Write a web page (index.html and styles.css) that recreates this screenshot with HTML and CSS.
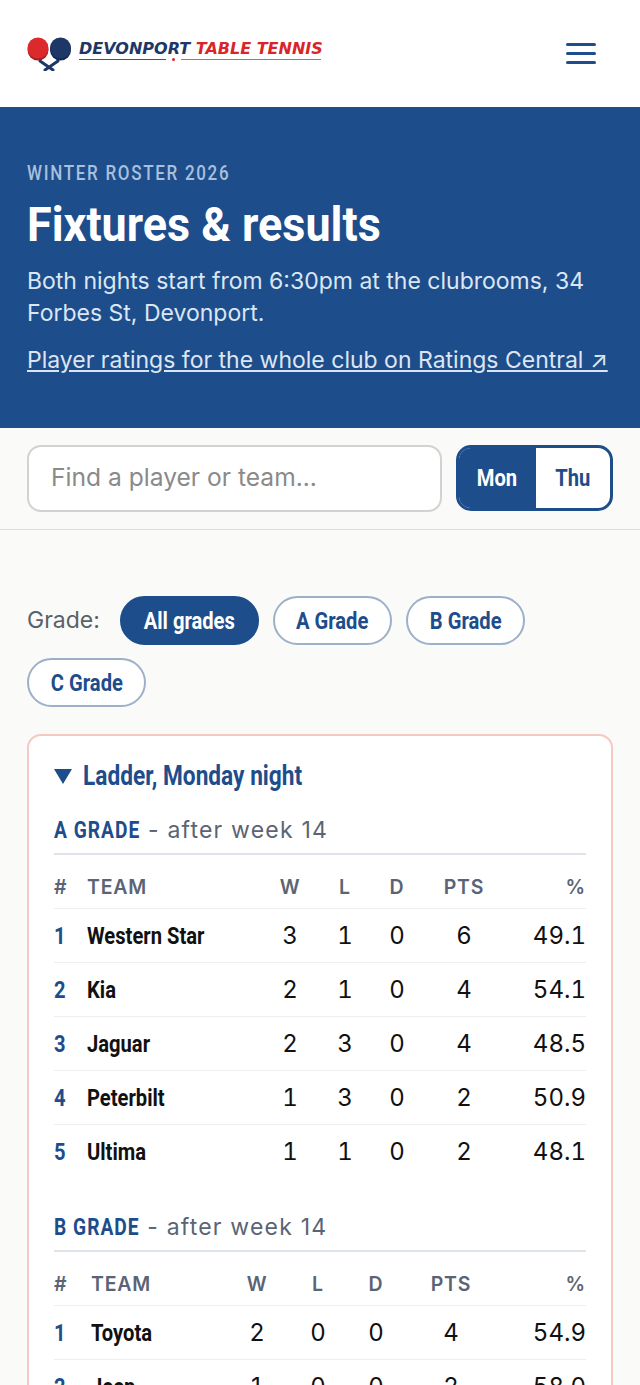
FILE: index.html
```html
<!DOCTYPE html>
<html lang="en">
<head>
    <meta charset="UTF-8">
    <meta name="viewport" content="width=device-width, initial-scale=1.0">
    <title>Fixtures &amp; results</title>
    <link rel="stylesheet" href="styles.css">
</head>
<body>
    <header class="site-header">
        <a class="logo" href="#">
            <svg class="logo-mark" width="46" height="34" viewBox="0 0 46 34">
                <path d="M13 24 L26 33 M31 24 L18 33" stroke="#1d3767" stroke-width="3" stroke-linecap="round"/>
                <circle cx="11" cy="13" r="10.5" fill="#a61c22"/>
                <circle cx="11" cy="11" r="10.5" fill="#dc2a2c"/>
                <circle cx="33.5" cy="13" r="10.5" fill="#14284f"/>
                <circle cx="33.5" cy="11" r="10.5" fill="#1d3767"/>
            </svg>
            <span class="logo-text">
                <span class="logo-name"><span class="logo-blue">DEVONPORT</span> <span class="logo-red">TABLE TENNIS</span></span>
                <span class="logo-rule"><i class="rule-blue"></i><i class="rule-dot"></i><i class="rule-red"></i></span>
            </span>
        </a>
        <button class="menu-btn" type="button" aria-label="Menu"><span></span><span></span><span></span></button>
    </header>

    <section class="hero">
        <p class="eyebrow">WINTER ROSTER 2026</p>
        <h1>Fixtures &amp; results</h1>
        <p class="intro">Both nights start from 6:30pm at the clubrooms, 34 Forbes St, Devonport.</p>
        <a class="ratings-link" href="#">Player ratings for the whole club on Ratings Central ↗</a>
    </section>

    <div class="toolbar">
        <input class="search" type="text" placeholder="Find a player or team...">
        <div class="night-toggle">
            <button class="night active" type="button"><span class="squeeze">Mon</span></button>
            <button class="night" type="button"><span class="squeeze">Thu</span></button>
        </div>
    </div>

    <main class="content">
        <div class="grade-filter">
            <span class="grade-label">Grade:</span>
            <button class="chip active" type="button"><span class="squeeze">All grades</span></button>
            <button class="chip" type="button"><span class="squeeze">A Grade</span></button>
            <button class="chip" type="button"><span class="squeeze">B Grade</span></button>
            <button class="chip" type="button"><span class="squeeze">C Grade</span></button>
        </div>

        <details class="card" open>
            <summary class="card-title"><span class="caret"></span><span class="squeeze-left">Ladder, Monday night</span></summary>

            <h2 class="grade-head"><strong>A GRADE</strong> - after week 14</h2>
            <table class="ladder">
                <colgroup>
                    <col class="a-pos"><col class="a-team"><col class="a-w"><col class="a-l"><col class="a-d"><col class="a-pts"><col class="a-pct">
                </colgroup>
                <thead>
                    <tr><th class="left">#</th><th class="left">TEAM</th><th>W</th><th>L</th><th>D</th><th>PTS</th><th class="right">%</th></tr>
                </thead>
                <tbody>
                    <tr><td class="pos"><span class="squeeze-left">1</span></td><td class="team"><span class="squeeze-left">Western Star</span></td><td>3</td><td>1</td><td>0</td><td>6</td><td class="right">49.1</td></tr>
                    <tr><td class="pos"><span class="squeeze-left">2</span></td><td class="team"><span class="squeeze-left">Kia</span></td><td>2</td><td>1</td><td>0</td><td>4</td><td class="right">54.1</td></tr>
                    <tr><td class="pos"><span class="squeeze-left">3</span></td><td class="team"><span class="squeeze-left">Jaguar</span></td><td>2</td><td>3</td><td>0</td><td>4</td><td class="right">48.5</td></tr>
                    <tr><td class="pos"><span class="squeeze-left">4</span></td><td class="team"><span class="squeeze-left">Peterbilt</span></td><td>1</td><td>3</td><td>0</td><td>2</td><td class="right">50.9</td></tr>
                    <tr><td class="pos"><span class="squeeze-left">5</span></td><td class="team"><span class="squeeze-left">Ultima</span></td><td>1</td><td>1</td><td>0</td><td>2</td><td class="right">48.1</td></tr>
                </tbody>
            </table>

            <h2 class="grade-head second"><strong>B GRADE</strong> - after week 14</h2>
            <table class="ladder">
                <colgroup>
                    <col class="b-pos"><col class="b-team"><col class="b-w"><col class="b-l"><col class="b-d"><col class="b-pts"><col class="b-pct">
                </colgroup>
                <thead>
                    <tr><th class="left">#</th><th class="left">TEAM</th><th>W</th><th>L</th><th>D</th><th>PTS</th><th class="right">%</th></tr>
                </thead>
                <tbody>
                    <tr><td class="pos"><span class="squeeze-left">1</span></td><td class="team"><span class="squeeze-left">Toyota</span></td><td>2</td><td>0</td><td>0</td><td>4</td><td class="right">54.9</td></tr>
                    <tr><td class="pos"><span class="squeeze-left">2</span></td><td class="team"><span class="squeeze-left">Jeep</span></td><td>1</td><td>0</td><td>0</td><td>2</td><td class="right">58.0</td></tr>
                </tbody>
            </table>
        </details>
    </main>
</body>
</html>
```

FILE: styles.css
```css
* {
    box-sizing: border-box;
}
body {
    margin: 0;
    font-family: Inter, Arial, sans-serif;
    background-color: #fafaf9;
    color: #111;
}
button {
    cursor: pointer;
}

/* no condensed face is installed, so Roboto gets narrowed */
.squeeze,
.squeeze-left {
    display: inline-block;
    transform: scaleX(0.84);
    white-space: nowrap;
}
.squeeze-left {
    transform-origin: left center;
}

/* header */
.site-header {
    height: 107px;
    background-color: #fff;
    padding: 0 44px 0 27px;
    display: flex;
    align-items: center;
    justify-content: space-between;
}
.logo {
    display: flex;
    align-items: center;
    gap: 6px;
    text-decoration: none;
}
.logo-mark {
    display: block;
}
.logo-text {
    display: flex;
    flex-direction: column;
    gap: 1px;
    margin-top: -6px;
}
.logo-name {
    font-family: "DejaVu Sans", Arial, sans-serif;
    font-size: 16px;
    line-height: 16px;
    font-weight: 700;
    font-style: italic;
    white-space: nowrap;
}
.logo-blue {
    color: #1d3767;
}
.logo-red {
    color: #d9252a;
}
.logo-rule {
    display: flex;
    align-items: center;
    gap: 6px;
}
.logo-rule i {
    display: block;
    height: 1px;
}
.rule-blue {
    width: 87px;
    background-color: #3a5488;
}
.rule-dot {
    width: 3px;
    height: 3px !important;
    border-radius: 50%;
    background-color: #d9252a;
}
.rule-red {
    width: 140px;
    background-color: #e8585a;
}
.menu-btn {
    width: 30px;
    padding: 0;
    border: none;
    background: none;
    display: flex;
    flex-direction: column;
    gap: 6px;
}
.menu-btn span {
    display: block;
    height: 3px;
    border-radius: 2px;
    background-color: #1e4d8b;
}

/* hero */
.hero {
    height: 321px;
    padding: 55px 27px 0;
    background-color: #1e4d8b;
    color: #fff;
}
.eyebrow {
    margin: 0;
    font-family: Roboto, Arial, sans-serif;
    font-size: 20px;
    line-height: 23px;
    font-weight: 500;
    letter-spacing: 2px;
    color: #a9c0dc;
    transform: scaleX(0.85);
    transform-origin: left center;
    white-space: nowrap;
}
h1 {
    margin: 12px 0 0;
    font-family: Roboto, Arial, sans-serif;
    font-size: 48px;
    line-height: 56px;
    font-weight: 700;
    transform: scaleX(0.936);
    transform-origin: left center;
    white-space: nowrap;
}
.intro {
    margin: 12px 0 0;
    font-size: 23px;
    line-height: 32px;
    color: #dce6f3;
}
.ratings-link {
    display: inline-block;
    margin-top: 15px;
    font-size: 23px;
    line-height: 33px;
    color: #dce6f3;
    white-space: nowrap;
}

/* search and night switch */
.toolbar {
    height: 102px;
    padding: 17px 27px 0;
    display: flex;
    gap: 14px;
    align-items: flex-start;
    border-bottom: 1px solid #ddd;
}
.search {
    flex: 1;
    min-width: 0;
    height: 67px;
    padding: 0 23px 4px 22px;
    border: 2px solid #d2d2d2;
    border-radius: 14px;
    background-color: #fff;
    font-family: Inter, Arial, sans-serif;
    font-size: 24.6px;
}
.search::placeholder {
    color: #8a8a8a;
}
.night-toggle {
    width: 157px;
    height: 66px;
    display: flex;
    overflow: hidden;
    border: 3px solid #1e4d8b;
    border-radius: 15px;
    background-color: #fff;
}
.night {
    border: none;
    padding: 0;
    background: none;
    font-family: Roboto, Arial, sans-serif;
    font-size: 24px;
    font-weight: 700;
    color: #1e4d8b;
    flex: 1;
}
.night.active {
    flex: 0 0 77px;
    background-color: #1e4d8b;
    color: #fff;
}

/* grade filter */
.content {
    padding: 66px 27px 0;
}
.grade-filter {
    display: flex;
    flex-wrap: wrap;
    align-items: center;
    gap: 13px 14px;
}
.grade-label {
    font-size: 23px;
    line-height: 46px;
    padding-bottom: 2px;
    color: #5a6068;
    margin-right: 6px;
}
.chip {
    width: 119px;
    height: 49px;
    padding: 0;
    border: 2px solid #9db0c9;
    border-radius: 25px;
    background-color: #fff;
    font-family: Roboto, Arial, sans-serif;
    font-size: 24px;
    font-weight: 700;
    color: #1e4d8b;
}
.chip.active {
    width: 139px;
    border-color: #1e4d8b;
    background-color: #1e4d8b;
    color: #fff;
}

/* ladder card */
.card {
    margin-top: 27px;
    padding: 21px 25px 27px;
    border: 2px solid #f5c8c1;
    border-radius: 14px;
    background-color: #fff;
}
.card-title {
    display: flex;
    align-items: center;
    gap: 11px;
    list-style: none;
    font-family: Roboto, Arial, sans-serif;
    font-size: 27px;
    line-height: 38px;
    font-weight: 700;
    color: #1e4d8b;
}
.caret {
    width: 0;
    height: 0;
    border-left: 9px solid transparent;
    border-right: 9px solid transparent;
    border-top: 15px solid #1e4d8b;
}
.grade-head {
    margin: 20px 0 0;
    padding-bottom: 7px;
    border-bottom: 2px solid #dfe4ea;
    font-size: 23px;
    line-height: 30px;
    font-weight: 400;
    letter-spacing: 1.2px;
    color: #5a6474;
    white-space: nowrap;
}
.grade-head strong {
    display: inline-block;
    margin-right: -17px;
    font-family: Roboto, Arial, sans-serif;
    font-weight: 700;
    color: #1e4d8b;
    transform: scaleX(0.835);
    transform-origin: left center;
}
.grade-head.second {
    margin-top: 34px;
}
.ladder {
    width: 100%;
    table-layout: fixed;
    border-collapse: collapse;
}
.ladder th {
    height: 53px;
    padding: 12px 0 0;
    text-align: center;
    font-size: 19.5px;
    font-weight: 600;
    letter-spacing: 0.8px;
    color: #5a6474;
}
.ladder td {
    height: 54px;
    padding: 1px 0 0;
    text-align: center;
    font-size: 24px;
    font-variant-numeric: tabular-nums;
    border-top: 1px solid #eee;
}
.ladder .left {
    text-align: left;
}
.ladder .right {
    text-align: right;
}
.ladder .pos {
    text-align: left;
    font-family: Roboto, Arial, sans-serif;
    font-weight: 700;
    color: #1e4d8b;
}
.ladder .team {
    text-align: left;
    font-family: Roboto, Arial, sans-serif;
    font-size: 24px;
    font-weight: 700;
}

.a-pos { width: 33px; }
.a-team { width: 176px; }
.a-w { width: 54px; }
.a-l { width: 56px; }
.a-d { width: 48px; }
.a-pts { width: 86px; }
.a-pct { width: 79px; }
.b-pos { width: 37px; }
.b-team { width: 139px; }
.b-w { width: 54px; }
.b-l { width: 68px; }
.b-d { width: 48px; }
.b-pts { width: 102px; }
.b-pct { width: 84px; }
```
